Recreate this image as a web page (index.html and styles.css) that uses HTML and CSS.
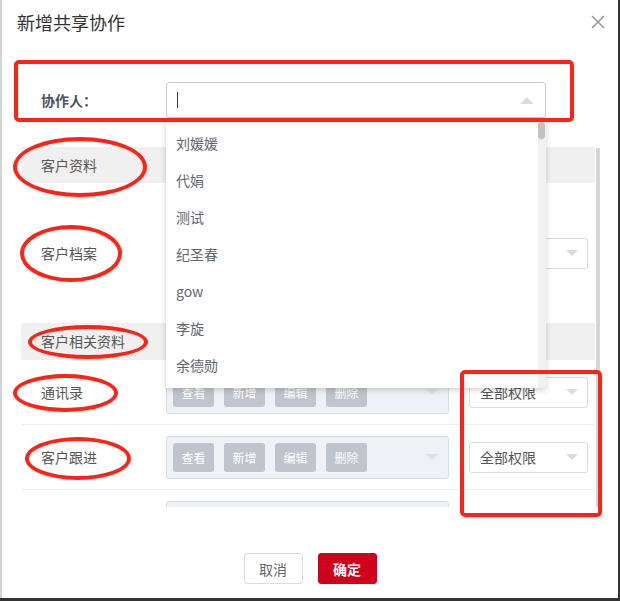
FILE: index.html
```html
<!DOCTYPE html>
<html lang="zh-CN">
<head>
    <meta charset="UTF-8">
    <meta name="viewport" content="width=device-width, initial-scale=1.0">
    <title>新增共享协作</title>
    <link rel="stylesheet" href="styles.css">
</head>
<body>
    <div class="dialog">
        <div class="dlg-head">
            <span class="dlg-title">新增共享协作</span>
            <button class="dlg-close" type="button">
                <svg width="14" height="14" viewBox="0 0 14 14"><path d="M1 1L13 13M13 1L1 13" stroke="#9a9a9a" stroke-width="1.6" fill="none"/></svg>
            </button>
        </div>

        <div class="dlg-body">
            <div class="field-row">
                <label class="field-label">协作人：</label>
                <div class="combo">
                    <span class="caret"></span>
                    <span class="arrow-up"></span>
                </div>
            </div>

            <div class="perm-area">
                <div class="perm-list">
                    <div class="sec">客户资料</div>
                    <div class="perm-row tall">
                        <span class="perm-name">客户档案</span>
                        <div class="perm-box">
                            <span class="pbtn">查看</span><span class="pbtn">新增</span><span class="pbtn">编辑</span><span class="pbtn">删除</span>
                            <span class="arrow-down box-arrow"></span>
                        </div>
                        <div class="scope"><span>全部权限</span><span class="arrow-down"></span></div>
                    </div>

                    <div class="sec sec-2">客户相关资料</div>
                    <div class="perm-row">
                        <span class="perm-name">通讯录</span>
                        <div class="perm-box">
                            <span class="pbtn">查看</span><span class="pbtn">新增</span><span class="pbtn">编辑</span><span class="pbtn">删除</span>
                            <span class="arrow-down box-arrow"></span>
                        </div>
                        <div class="scope"><span>全部权限</span><span class="arrow-down"></span></div>
                    </div>
                    <div class="perm-row">
                        <span class="perm-name">客户跟进</span>
                        <div class="perm-box">
                            <span class="pbtn">查看</span><span class="pbtn">新增</span><span class="pbtn">编辑</span><span class="pbtn">删除</span>
                            <span class="arrow-down box-arrow"></span>
                        </div>
                        <div class="scope"><span>全部权限</span><span class="arrow-down"></span></div>
                    </div>
                    <!-- 下一行，只露出顶部 -->
                    <div class="perm-row">
                        <span class="perm-name"></span>
                        <div class="perm-box"></div>
                    </div>
                </div>
                <div class="vbar"></div>
            </div>
        </div>

        <div class="dlg-foot">
            <button class="btn btn-cancel" type="button">取消</button>
            <button class="btn btn-ok" type="button">确定</button>
        </div>

        <!-- 下拉选项 -->
        <div class="dropdown">
            <ul class="options">
                <li>刘媛媛</li>
                <li>代娟</li>
                <li>测试</li>
                <li>纪圣春</li>
                <li>gow</li>
                <li>李旋</li>
                <li>余德勋</li>
            </ul>
            <div class="dd-track"><span class="dd-thumb"></span></div>
        </div>
    </div>

    <!-- 标注 -->
    <div class="mark mark-rect rect-top"></div>
    <div class="mark mark-rect rect-scope"></div>
    <div class="mark mark-oval oval-1"></div>
    <div class="mark mark-oval oval-2"></div>
    <div class="mark mark-oval oval-3"></div>
    <div class="mark mark-oval oval-4"></div>
    <div class="mark mark-oval oval-5"></div>
</body>
</html>
```

FILE: styles.css
```css
* {
    box-sizing: border-box;
}
body {
    margin: 0;
    background: #333;
    font-family: "Noto Sans CJK SC", "Microsoft YaHei", sans-serif;
    font-size: 14px;
    color: #555;
    position: relative;
    width: 620px;
    height: 601px;
    overflow: hidden;
}
.dialog {
    position: relative;
    width: 618px;
    height: 598px;
    background: #fff;
    border-left: 2px solid #d4d4d4;
}
.dlg-head {
    height: 44px;
    display: flex;
    align-items: center;
    justify-content: space-between;
    padding: 0 13px 0 15px;
}
.dlg-title {
    font-size: 18px;
    color: #333;
    line-height: 24px;
}
.dlg-close {
    border: none;
    background: none;
    padding: 0;
    width: 14px;
    height: 14px;
    display: flex;
    cursor: pointer;
}
.dlg-body {
    padding: 0 18px 0 19px;
}
.field-row {
    display: flex;
    align-items: center;
    margin-top: 38px;
    height: 36px;
}
.field-label {
    width: 145px;
    padding-left: 20px;
    font-weight: bold;
    color: #4a5466;
    line-height: 20px;
}
.combo {
    position: relative;
    width: 380px;
    height: 36px;
    border: 1px solid #ccc;
    border-radius: 3px;
    display: flex;
    align-items: center;
    justify-content: space-between;
    padding: 0 11px 0 10px;
}
.caret {
    width: 1px;
    height: 16px;
    background: #333;
}
.arrow-up {
    width: 0;
    height: 0;
    border-left: 7px solid transparent;
    border-right: 7px solid transparent;
    border-bottom: 7px solid #dcdcdc;
}
.perm-area {
    display: flex;
    gap: 1px;
    margin-top: 29px;
    height: 360px;
    overflow: hidden;
}
.perm-list {
    width: 574px;
}
.vbar {
    width: 4px;
    height: 100%;
    background: #d6d6d6;
    margin-top: 1px;
}
.sec {
    height: 36px;
    line-height: 36px;
    padding-left: 20px;
    background: #f0f0f0;
    border-radius: 2px;
    color: #555;
}
.sec-2 {
    height: 37px;
    line-height: 37px;
}
.perm-row {
    display: flex;
    align-items: center;
    height: 65px;
    border-bottom: 1px solid #ececec;
}
.perm-row.tall {
    height: 140px;
    border-bottom: none;
}
.perm-name {
    width: 145px;
    padding-left: 20px;
    line-height: 20px;
    color: #555;
}
.perm-box {
    position: relative;
    width: 283px;
    height: 43px;
    border: 1px solid #d6dde6;
    border-radius: 3px;
    background: #eef1f5;
    display: flex;
    align-items: center;
    gap: 10px;
    padding: 0 6px;
}
.pbtn {
    width: 41px;
    height: 29px;
    line-height: 29px;
    text-align: center;
    font-size: 12px;
    color: #fff;
    background: #c0c4cc;
    border-radius: 3px;
}
.arrow-down {
    width: 0;
    height: 0;
    border-left: 6px solid transparent;
    border-right: 6px solid transparent;
    border-top: 6px solid #d8dbe0;
}
.box-arrow {
    margin-left: auto;
    margin-right: 4px;
    border-top-color: #dde0e5;
}
.scope {
    margin-left: 20px;
    width: 119px;
    height: 31px;
    border: 1px solid #dcdcdc;
    border-radius: 3px;
    display: flex;
    align-items: center;
    justify-content: space-between;
    padding: 0 9px 0 10px;
    color: #555;
    line-height: 20px;
}
.dlg-foot {
    display: flex;
    justify-content: center;
    gap: 15px;
    margin-top: 46px;
}
.btn {
    width: 59px;
    height: 31px;
    border-radius: 3px;
    font-family: inherit;
    font-size: 14px;
    padding: 0;
    cursor: pointer;
}
.btn-cancel {
    background: #fff;
    border: 1px solid #dcdcdc;
    color: #666;
}
.btn-ok {
    background: #d0021b;
    border: 1px solid #d0021b;
    color: #fff;
    font-weight: bold;
}
.dropdown {
    position: absolute;
    left: 164px;
    top: 118px;
    width: 380px;
    height: 270px;
    background: #fff;
    box-shadow: 0 2px 6px rgba(0, 0, 0, 0.18);
    display: flex;
}
.options {
    list-style: none;
    margin: 0;
    padding: 7px 0 0 10px;
    flex: 1;
}
.options li {
    height: 37px;
    line-height: 37px;
    color: #5f6670;
}
.dd-track {
    width: 8px;
    height: 100%;
    background: #f1f1f1;
    padding-top: 4px;
}
.dd-thumb {
    display: block;
    width: 7px;
    height: 17px;
    border-radius: 4px;
    background: #c1c1c1;
}
.mark {
    position: absolute;
    border: 4px solid #ff2317;
}
.mark-rect {
    border-radius: 5px;
}
.mark-oval {
    border-radius: 50%;
}
.rect-top {
    left: 14px;
    top: 60px;
    width: 560px;
    height: 62px;
}
.rect-scope {
    left: 460px;
    top: 370px;
    width: 142px;
    height: 147px;
}
.oval-1 {
    left: 13px;
    top: 137px;
    width: 134px;
    height: 60px;
}
.oval-2 {
    left: 20px;
    top: 225px;
    width: 102px;
    height: 57px;
}
.oval-3 {
    left: 28px;
    top: 325px;
    width: 120px;
    height: 34px;
}
.oval-4 {
    left: 13px;
    top: 374px;
    width: 105px;
    height: 38px;
}
.oval-5 {
    left: 25px;
    top: 437px;
    width: 106px;
    height: 43px;
}
```
